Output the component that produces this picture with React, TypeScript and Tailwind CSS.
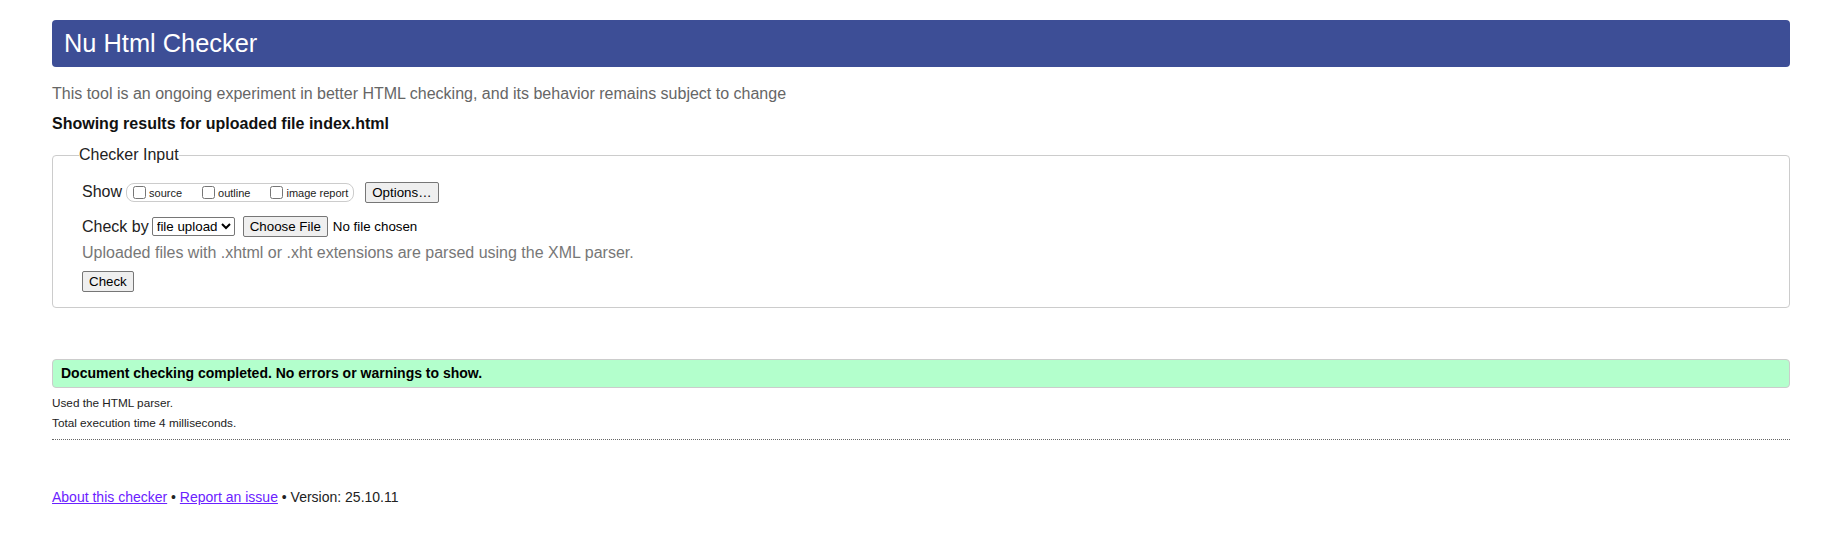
import { useState } from "react";

// Nu Html Checker - result page after uploading a file.

const checks = [
  { id: "source", label: "source" },
  { id: "outline", label: "outline" },
  { id: "image", label: "image report" },
];

const btn =
  "bg-[#efefef] border border-[#767676] rounded-[2px] text-[13.33px] leading-[15px] text-black px-[6px] h-[21px]";

export default function App() {
  const [shown, setShown] = useState<Record<string, boolean>>({});
  const [method, setMethod] = useState("file");

  return (
    <div className="min-h-[540px] bg-white font-['Liberation_Sans',Arial,sans-serif] text-[#222] pt-[20px] pl-[52px] pr-[55px]">
      <h1 className="h-[47px] rounded-[4px] bg-[#3d4e96] text-white text-[25.4px] pl-[12px] flex items-center">
        Nu Html Checker
      </h1>

      <p className="mt-[17px] h-[20px] text-[16px] leading-[20px] text-[#666]">
        This tool is an ongoing experiment in better HTML checking, and its behavior remains subject to change
      </p>

      <p className="mt-[10px] h-[20px] text-[16px] leading-[20px] font-bold text-[#111]">
        Showing results for uploaded file index.html
      </p>

      <form onSubmit={(e) => e.preventDefault()}>
        <fieldset className="mt-[11px] border border-[#cccccc] rounded-[4px] pl-[26px] pt-[16px] pb-[15px]">
          <legend className="text-[16px] leading-[20px] text-[#222]">Checker Input</legend>

          <div className="pl-[3px]">
            <div className="flex items-center h-[22px]">
              <span className="text-[16px]">Show</span>
              <div className="ml-[4px] flex items-center gap-[20px] h-[19px] border border-[#cccccc] rounded-[8px] pl-[6px] pr-[5px]">
                {checks.map((c) => (
                  <label key={c.id} className="flex items-center text-[11px] leading-[13px]">
                    <input
                      type="checkbox"
                      className="m-0 w-[13px] h-[13px]"
                      checked={!!shown[c.id]}
                      onChange={(e) => setShown({ ...shown, [c.id]: e.target.checked })}
                    />
                    <span className="ml-[3px] mt-[2px]">{c.label}</span>
                  </label>
                ))}
              </div>
              <button type="button" className={`${btn} ml-[11px]`}>
                Options…
              </button>
            </div>

            <div className="mt-[13px] flex items-center h-[21px]">
              <span className="text-[16px]">Check by</span>
              <select
                value={method}
                onChange={(e) => setMethod(e.target.value)}
                className="ml-[3px] h-[19px] border border-[#767676] rounded-[2px] bg-white text-[13.33px] text-black pl-0"
              >
                <option value="address">address</option>
                <option value="file">file upload</option>
                <option value="text">text input</option>
              </select>
              <button type="button" className={`${btn} ml-[8px]`}>
                Choose File
              </button>
              <span className="ml-[5px] text-[13.33px] text-black">No file chosen</span>
            </div>

            <p className="mt-[7px] h-[18px] text-[16px] leading-[18px] text-[#777]">
              Uploaded files with .xhtml or .xht extensions are parsed using the XML parser.
            </p>

            <button type="submit" className={`${btn} mt-[9px] block`}>
              Check
            </button>
          </div>
        </fieldset>
      </form>

      <div className="mt-[51px] h-[29px] flex items-center border border-[#cccccc] rounded-[4px] bg-[#b3ffcc] pl-[8px] text-[14px] font-bold text-black">
        Document checking completed. No errors or warnings to show.
      </div>

      <div className="mt-[5px] text-[11.75px] leading-[20px] text-[#222]">
        <p>Used the HTML parser.</p>
        <p>Total execution time 4 milliseconds.</p>
      </div>

      <hr className="mt-[6px] border-0 border-t border-dotted border-[#666]" />

      <p className="mt-[47px] text-[14px] leading-[20px] text-[#222]">
        <a href="#about" className="underline text-[#6b21ff]">About this checker</a>
        {" • "}
        <a href="#issue" className="underline text-[#6b21ff]">Report an issue</a>
        {" • Version: 25.10.11"}
      </p>
    </div>
  );
}
